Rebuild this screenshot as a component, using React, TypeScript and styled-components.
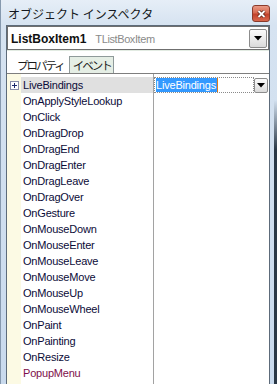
import React from "react";
import styled, { createGlobalStyle } from "styled-components";

const GlobalStyle = createGlobalStyle`
    html, body {
        margin: 0;
        padding: 0;
        background: #cfdeef;
    }
`;

const Window = styled.div`
    width: 277px;
    height: 384px;
    box-sizing: border-box;
    display: flex;
    flex-direction: column;
    overflow: hidden;
    padding: 0 7px 0 5px;
    border-left: 1px solid #8699ae;
    background:
        linear-gradient(to bottom, rgba(34, 48, 63, 0) 0, rgba(34, 48, 63, 0) 100px, #2a3846 150px) right top / 3px 100% no-repeat,
        linear-gradient(to bottom, #e6eef7 0, #d6e3f1 25px, #c9daed 100%);
`;

const TitleBar = styled.div`
    height: 25px;
    flex: none;
    display: flex;
    align-items: flex-start;
    justify-content: space-between;
    padding-left: 2px;
`;

const Title = styled.span`
    margin-top: 5px;
    line-height: 18px;
    font-family: "Noto Sans CJK JP", sans-serif;
    font-size: 12px;
    color: #141820;
    white-space: pre;
`;

const CloseButton = styled.div`
    margin-top: 5px;
    width: 18px;
    height: 17px;
    box-sizing: border-box;
    border: 1px solid #8a3b2c;
    border-radius: 3px;
    background: linear-gradient(to bottom, #e99a86 0, #d86a50 45%, #c2412a 55%, #d9674c 100%);
    display: flex;
    align-items: center;
    justify-content: center;
`;

const Client = styled.div`
    flex: 1;
    display: flex;
    flex-direction: column;
    background: #ffffff;
    border: 1px solid #5d6b7a;
    border-bottom: none;
    min-height: 0;
`;

const Combo = styled.div`
    height: 24px;
    flex: none;
    box-sizing: border-box;
    border: 1px solid #6f6f6f;
    display: flex;
    align-items: center;
    padding: 1px 0 0 3px;
    font-family: "Liberation Sans", Arial, sans-serif;
`;

const ComboName = styled.span`
    font-weight: bold;
    font-size: 12px;
    color: #101010;
`;

const ComboType = styled.span`
    margin-left: 9px;
    font-size: 11px;
    letter-spacing: -0.4px;
    color: #8a8a8a;
    flex: 1;
`;

const DropButton = styled.div<{ $small?: boolean }>`
    width: ${p => (p.$small ? 14 : 18)}px;
    height: ${p => (p.$small ? 15 : 19)}px;
    box-sizing: border-box;
    flex: none;
    border: 1px solid #8c8c8c;
    border-radius: 2px;
    background: linear-gradient(to bottom, #fbfbfb 0, #ececec 50%, #dadada 100%);
    display: flex;
    align-items: center;
    justify-content: center;
    margin-right: 1px;
`;

const TabStrip = styled.div`
    height: 24px;
    flex: none;
    box-sizing: border-box;
    border-top: 1px solid #e2ebe2;
    border-bottom: 1px solid #7e7e7e;
    display: flex;
    align-items: flex-end;
    padding-left: 6px;
`;

const Tab = styled.div<{ $active?: boolean }>`
    height: 17px;
    box-sizing: border-box;
    padding: ${p => (p.$active ? "0 2px 0 3px" : "0 4px 0 3px")};
    border: 1px solid ${p => (p.$active ? "#8f9a9a" : "transparent")};
    border-bottom: none;
    background: ${p => (p.$active ? "#e5eee5" : "transparent")};
    font-family: "Noto Sans CJK JP", sans-serif;
    font-size: 11.5px;
    letter-spacing: -2px;
    line-height: 16px;
    color: #1a1a1a;
`;

const PropertyGrid = styled.div`
    flex: 1;
    padding-top: 3px;
    background: linear-gradient(
        to right,
        #fcfae4 0,
        #fcfae4 14px,
        #ffffff 14px,
        #ffffff 146px,
        #a2a2a2 146px,
        #a2a2a2 147px,
        #ffffff 147px
    );
    font-family: "Liberation Sans", Arial, sans-serif;
    font-size: 11px;
    letter-spacing: -0.2px;
`;

const Row = styled.div`
    display: grid;
    grid-template-columns: 14px 133px 1fr;
    height: 16px;
`;

const Gutter = styled.div`
    display: flex;
    align-items: center;
    padding-left: 3px;
`;

const Expander = styled.div`
    width: 9px;
    height: 9px;
    box-sizing: border-box;
    border: 1px solid #8b8fa8;
    background: #ffffff;
    display: flex;
    align-items: center;
    justify-content: center;
    margin-top: 1px;
`;

const NameCell = styled.div<{ $selected?: boolean; $link?: boolean }>`
    box-sizing: border-box;
    border-right: 1px solid #a2a2a2;
    background: ${p => (p.$selected ? "#e0e0e0" : "transparent")};
    color: ${p => (p.$link ? "#7e0f4a" : "#0b0b38")};
    padding-left: 2px;
    line-height: 16px;
    white-space: nowrap;
    overflow: hidden;
`;

const ValueCell = styled.div`
    display: flex;
    align-items: center;
    padding-left: 0;
`;

const Editor = styled.div`
    flex: 1;
    height: 16px;
    box-sizing: border-box;
    border: 1px dotted #8a8a8a;
    display: flex;
    align-items: stretch;
    padding-left: 1px;
`;

const Selection = styled.span`
    background: #3399ff;
    color: #ffffff;
    line-height: 14px;
    padding-right: 1px;
    border-right: 1px solid #e07a1c;
`;

const Arrow = () => (
    <svg width="8" height="5" viewBox="0 0 8 5">
        <path d="M0 0 H8 L4 4.5 Z" fill="#000" />
    </svg>
);

const events = [
    "OnApplyStyleLookup",
    "OnClick",
    "OnDragDrop",
    "OnDragEnd",
    "OnDragEnter",
    "OnDragLeave",
    "OnDragOver",
    "OnGesture",
    "OnMouseDown",
    "OnMouseEnter",
    "OnMouseLeave",
    "OnMouseMove",
    "OnMouseUp",
    "OnMouseWheel",
    "OnPaint",
    "OnPainting",
    "OnResize",
];

export default function App() {
    return (
        <>
            <GlobalStyle />
            <Window>
                <TitleBar>
                    <Title>オブジェクト インスペクタ</Title>
                    <CloseButton>
                        <svg width="9" height="8" viewBox="0 0 9 8">
                            <path d="M1.5 1 L7.5 7 M7.5 1 L1.5 7" stroke="#5a2014" strokeWidth="3.4" />
                            <path d="M1.5 1 L7.5 7 M7.5 1 L1.5 7" stroke="#ffffff" strokeWidth="1.8" />
                        </svg>
                    </CloseButton>
                </TitleBar>
                <Client>
                    <Combo>
                        <ComboName>ListBoxItem1</ComboName>
                        <ComboType>TListBoxItem</ComboType>
                        <DropButton>
                            <Arrow />
                        </DropButton>
                    </Combo>
                    <TabStrip>
                        <Tab>プロパティ</Tab>
                        <Tab $active>イベント</Tab>
                    </TabStrip>
                    <PropertyGrid>
                        <Row>
                            <Gutter>
                                <Expander>
                                    <svg width="7" height="7" viewBox="0 0 7 7">
                                        <path d="M1 3.5 H6 M3.5 1 V6" stroke="#1c2a6a" strokeWidth="1" />
                                    </svg>
                                </Expander>
                            </Gutter>
                            <NameCell $selected>LiveBindings</NameCell>
                            <ValueCell>
                                <Editor>
                                    <Selection>LiveBindings</Selection>
                                </Editor>
                                <DropButton $small>
                                    <Arrow />
                                </DropButton>
                            </ValueCell>
                        </Row>
                        {events.map(name => (
                            <Row key={name}>
                                <Gutter />
                                <NameCell>{name}</NameCell>
                                <ValueCell />
                            </Row>
                        ))}
                        <Row>
                            <Gutter />
                            <NameCell $link>PopupMenu</NameCell>
                            <ValueCell />
                        </Row>
                    </PropertyGrid>
                </Client>
            </Window>
        </>
    );
}
